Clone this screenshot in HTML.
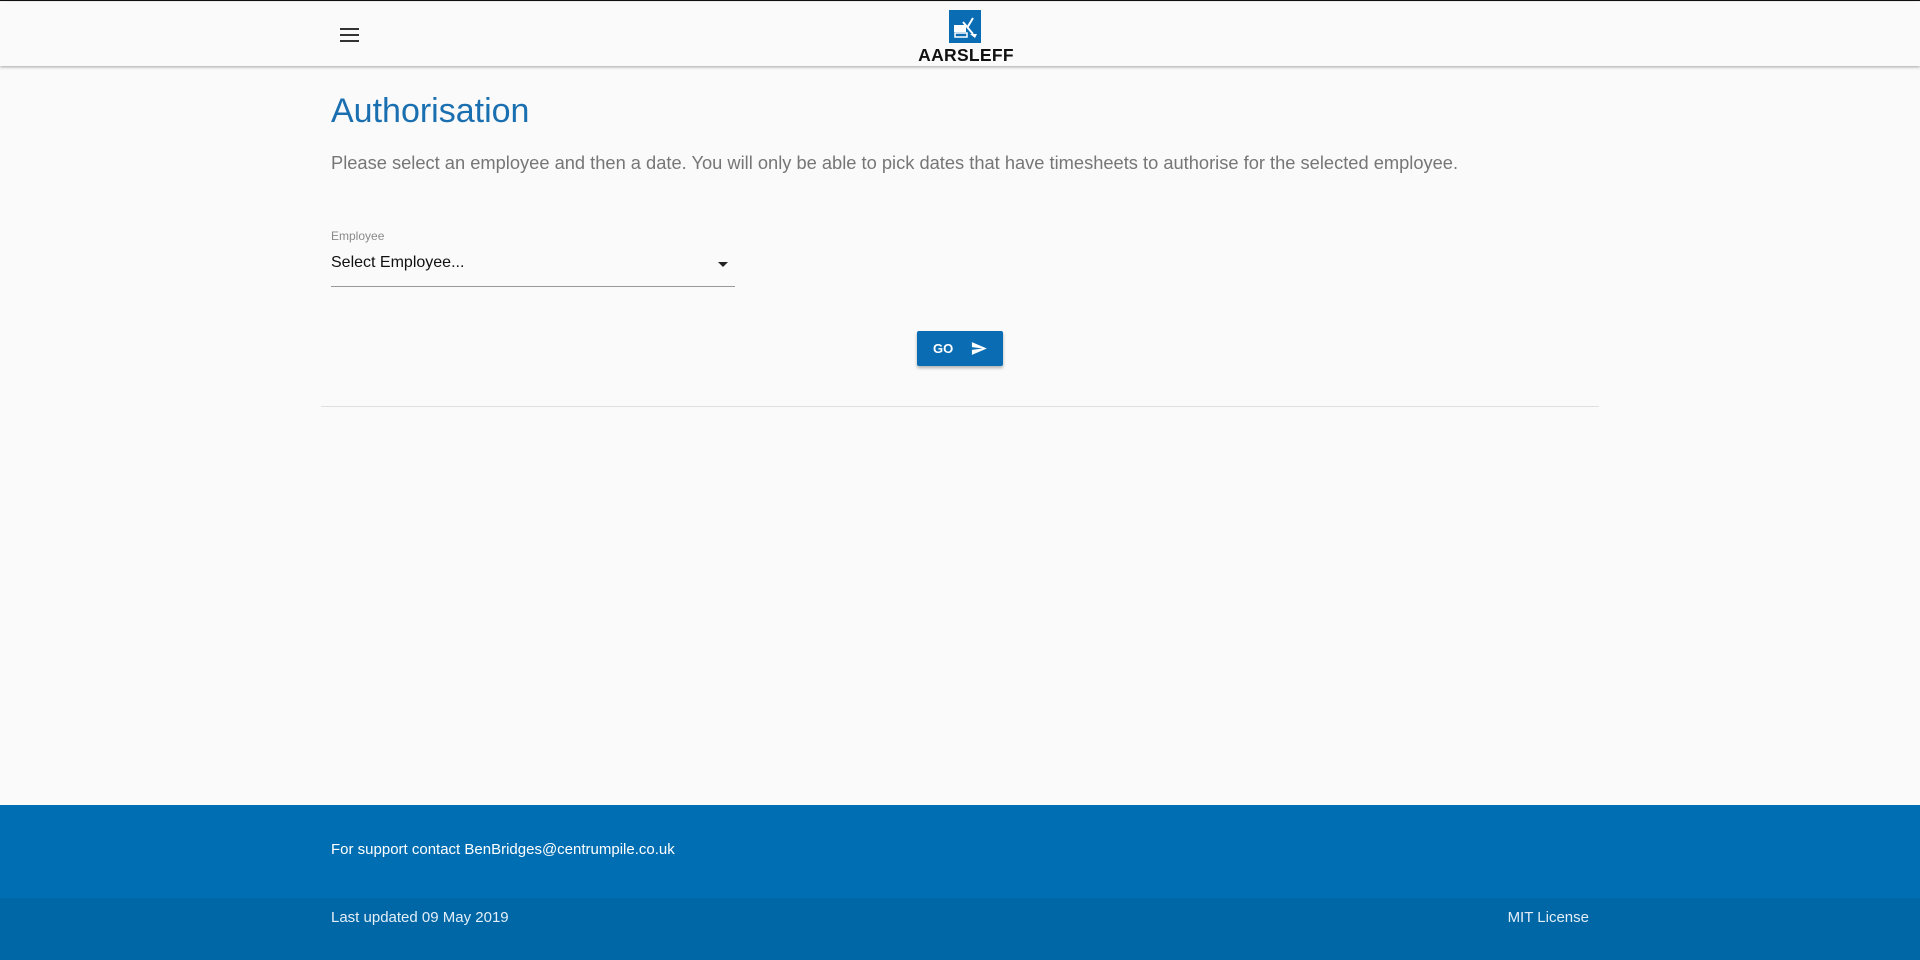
<!DOCTYPE html>
<html><head><style>
*{margin:0;padding:0;box-sizing:border-box}
body{width:1920px;height:959px;background:#fafafa;font-family:"Liberation Sans",sans-serif;position:relative;overflow:hidden;border-top:1px solid #111}
.hdr{position:absolute;top:1px;left:0;width:1920px;height:64px;background:#fafafa;box-shadow:0 1px 3px rgba(0,0,0,.35)}
.ham{position:absolute;left:340px;top:26px;width:19px}
.ham div{height:2px;background:#333;margin-bottom:4px}
.logo{position:absolute;left:949px;top:8px;width:32px;height:33px;background:#0a6db3}
.brand{position:absolute;left:912px;top:43px;width:108px;text-align:center;font-weight:bold;font-size:17.5px;color:#111;letter-spacing:.3px}
h1{position:absolute;left:331px;top:91px;font-size:34px;font-weight:normal;color:#1a6fb0}
p.d{position:absolute;left:331px;top:151px;font-size:18.3px;color:#767676}
.lab{position:absolute;left:331px;top:228px;font-size:12px;color:#8a8a8a}
.sel{position:absolute;left:331px;top:253px;font-size:16px;color:#111}
.arr{position:absolute;left:718px;top:261px;border-left:5px solid transparent;border-right:5px solid transparent;border-top:5px solid #222}
.ul{position:absolute;left:331px;top:285px;width:404px;height:1px;background:#999}
.btn{position:absolute;left:917px;top:330px;width:86px;height:35px;background:#0a6db3;border-radius:2px;box-shadow:0 2px 3px rgba(0,0,0,.3);color:#fff;font-size:13px;font-weight:bold}
.btn span{position:absolute;left:16px;top:10px}
.btn svg{position:absolute;left:52px;top:9px}
.hr{position:absolute;left:321px;top:405px;width:1278px;height:1px;background:#e0e0e0}
.f1{position:absolute;left:0;top:804px;width:1920px;height:93px;background:#006eb2}
.f2{position:absolute;left:0;top:897px;width:1920px;height:62px;background:#0067a7}
.ft{position:absolute;font-size:15px;color:#fff}
</style></head><body>
<div class="hdr">
<div class="ham"><div></div><div></div><div></div></div>
<div class="logo"><svg width="32" height="33" viewBox="0 0 32 33"><rect x="5" y="15" width="12" height="7" fill="#fff"/><rect x="6" y="23" width="12" height="4" fill="none" stroke="#fff" stroke-width="1.5"/><path d="M14 12 L24 24 M24 8 L18 18" stroke="#fff" stroke-width="2"/><path d="M21 24 L28 24 L26 28 Z" fill="#fff"/></svg></div>
<div class="brand">AARSLEFF</div>
</div>
<h1>Authorisation</h1>
<p class="d">Please select an employee and then a date. You will only be able to pick dates that have timesheets to authorise for the selected employee.</p>
<div class="lab">Employee</div>
<div class="sel">Select Employee...</div>
<div class="arr"></div>
<div class="ul"></div>
<div class="btn"><span>GO</span><svg width="20" height="17" viewBox="0 0 24 24"><path d="M2 21l21-9L2 3v7l15 2-15 2z" fill="#fff"/></svg></div>
<div class="hr"></div>
<div class="f1"></div><div class="f2"></div>
<div class="ft" style="left:331px;top:840px">For support contact BenBridges@centrumpile.co.uk</div>
<div class="ft" style="left:331px;top:908px;color:#e3eef7">Last updated 09 May 2019</div>
<div class="ft" style="right:331px;top:908px;color:#e3eef7">MIT License</div>
</body></html>
